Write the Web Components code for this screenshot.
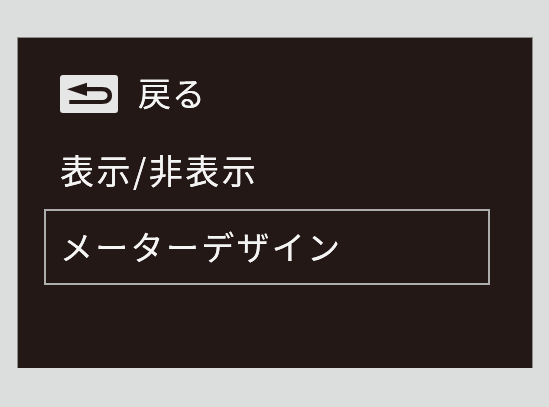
<!DOCTYPE html>
<html lang="ja"><head><meta charset="utf-8">
<style>html,body{margin:0;background:#dcdddd;}</style></head>
<body>
<menu-screen>
  <menu-item class="back"><back-icon slot="icon"></back-icon>戻る</menu-item>
  <menu-item>表示/非表示</menu-item>
  <menu-item selected>メーターデザイン</menu-item>
</menu-screen>
<script>
function def(name, html){
  customElements.define(name, class extends HTMLElement{
    constructor(){super();this.attachShadow({mode:'open'}).innerHTML=html;}
  });
}
def('menu-screen',`<style>
:host{display:flex;flex-direction:column;box-sizing:border-box;width:514px;height:330px;margin:38px 0 0 18px;padding:19px 42px 0 26px;background:#231815;box-shadow:0 0 0 1px #8f8d8b;color:#f4f4f4;font-family:"Noto Sans CJK JP","Noto Sans",sans-serif;filter:blur(.4px);}
</style><slot></slot>`);
def('menu-item',`<style>
:host{display:flex;align-items:center;box-sizing:border-box;height:74px;padding:0 14px;border:2px solid transparent;font-size:33px;letter-spacing:1px;line-height:1;white-space:nowrap;text-shadow:0 0 .6px #f4f4f4;}
:host(.back) .label{margin-bottom:3px;}
:host(:nth-child(2)){height:78px;font-size:34px;letter-spacing:2.5px;}
:host([selected]){height:76px;border-color:#adadad;letter-spacing:2.3px;}
:host([selected]) .label{margin-bottom:2px;}
::slotted([slot=icon]){margin-right:20px;}
</style><slot name="icon"></slot><span class="label"><slot></slot></span>`);
def('back-icon',`<style>
:host{display:block;width:58px;height:38px;}
svg{display:block;}
</style><svg width="58" height="38" viewBox="0 0 58 38"><rect width="58" height="38" rx="3" fill="#e6e6e6"/><path d="M7 14.3 L27 7.7 V12 H42 C48.5 12 52 15 52 20.5 C52 26 48.5 29 42 29 H9.3 V25 H42 C45.5 25 47.5 23.2 47.5 20.5 C47.5 18 45.5 16.2 42 16.2 H27 V21 Z" fill="#231815"/></svg>`);
</script>
</body></html>
